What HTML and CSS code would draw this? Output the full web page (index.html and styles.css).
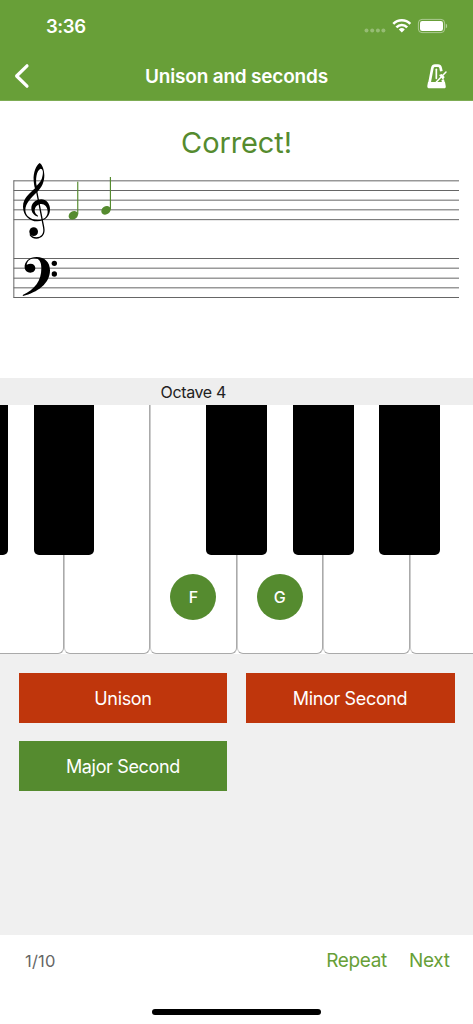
FILE: index.html
```html
<!DOCTYPE html>
<html lang="en">
  <head>
    <meta charset="utf-8" />
    <meta name="viewport" content="width=device-width, initial-scale=1" />
    <title>Unison and seconds</title>
    <link rel="stylesheet" href="styles.css">
  </head>
  <body>
    <div class="app">
      <header class="header">
        <div class="status-bar">
          <span class="time">3:36</span>
          <svg class="status-icons" viewBox="0 0 84 16" fill="#fff">
            <g opacity="0.3">
              <circle cx="2.5" cy="12.5" r="2" />
              <circle cx="8.2" cy="12.5" r="2" />
              <circle cx="13.9" cy="12.5" r="2" />
              <circle cx="19.4" cy="12.5" r="2" />
            </g>
            <g fill="none" stroke="#fff" stroke-width="2.6">
              <path d="M29.3 5.8a12 12 0 0 1 17 0" />
              <path d="M32.4 9.300a7.600 7.600 0 0 1 10.800 0" />
            </g>
            <path d="M34.800 11.400a4.300 4.300 0 0 1 6 0L37.800 14.400z" />
            <rect x="54.4" y="1.4" width="26.2" height="13.2" rx="3.6" fill="none" stroke="#fff" opacity="0.45" />
            <rect x="56" y="3" width="23" height="10" rx="2.2" />
            <path d="M81.800 5.800c1.800.5 1.800 4 0 4.500z" opacity="0.5" />
          </svg>
        </div>
        <div class="nav-bar">
          <svg class="back-icon" viewBox="0 0 16 26" fill="none" stroke="#fff" stroke-width="3.2" stroke-linecap="round" stroke-linejoin="round">
            <path d="M13 2.800L2.600 13L13 23.200" />
          </svg>
          <h1 class="title">Unison and seconds</h1>
          <svg class="metronome-icon" viewBox="578 186 66 80">
            <path fill="none" stroke="#fff" stroke-width="8" stroke-linejoin="round" d="M588 248L597 201Q599 194 605 194H614Q620 194 622 201L624 211M628 236L631 248" />
            <path fill="#fff" d="M584 243H635L637 254Q639 262 631 262H589Q581 262 582 254Z" />
            <path fill="none" stroke="#fff" stroke-width="5" stroke-linecap="round" d="M609 205V232" />
            <path fill="none" stroke="#fff" stroke-width="4.500" stroke-linecap="round" d="M609 243L638 213" />
            <path fill="#fff" d="M617 222L625 219L634 228L629 236Z" />
          </svg>
        </div>
      </header>

      <main class="score">
        <p class="feedback">Correct!</p>
        <svg class="staff" viewBox="0 0 1419 450">
          <!-- staff lines -->
          <g fill="none" stroke="#666" stroke-width="3">
            <path d="M41 77.500H1377M41 106.500H1377M41 135.500H1377M41 164.500H1377M41 194H1377" />
            <path d="M41 310.500H1377M41 339.500H1377M41 369.500H1377M41 398.500H1377M41 427.500H1377" />
            <path d="M41.500 76V429" />
          </g>
          <!-- treble clef -->
          <path fill-rule="evenodd" d="M119 24C109 30 99 52 101 77C102 88 103 94 105 100C90 114 69 130 69 155C69 181 88 199 112 199C136 199 150 183 150 163C150 145 138 133 124 133C106 133 94 145 94 160C94 172 102 182 113 185L114 182C107 178 104 172 104 166C105 154 114 147 124 147C134 147 143 156 143 170C143 186 130 195 114 195C92 195 76 182 76 165C76 145 93 129 112 110C126 97 133 80 133 61C133 44 127 29 119 24ZM122 41C128 41 130 50 128 60C126 75 119 84 110 92C106 75 109 46 122 41Z" />
          <path fill="none" stroke="#000" stroke-width="4" d="M107 94L131 217C135 239 123 249 109 249C101 249 94 245 90 238" />
          <circle cx="101" cy="230" r="13" />
          <!-- bass clef -->
          <path d="M74 339C72 320 88 306 110 306C134 306 150 322 150 346C150 386 112 413 69 423L68 420C105 403 124 378 124 340C124 320 117 310 104 310C92 310 82 317 80 329C96 322 106 330 106 339C106 348 99 353 91 353C81 353 75 347 74 339Z" />
          <circle cx="163" cy="325" r="8" />
          <circle cx="163" cy="357" r="8" />
          <!-- notes -->
          <g fill="#558b2f">
            <ellipse cx="220" cy="181" rx="15" ry="12" transform="rotate(-35 220 181)" />
            <rect x="231.500" y="80" width="3.500" height="98" />
            <ellipse cx="318" cy="166" rx="15" ry="12" transform="rotate(-35 318 166)" />
            <rect x="329.500" y="66" width="3.500" height="98" />
          </g>
        </svg>
      </main>

      <div class="octave-bar">Octave 4</div>
      <div class="keyboard">
        <div class="key"><span class="black-key"></span></div>
        <div class="key"><span class="black-key"></span></div>
        <div class="key"><span class="note">F</span></div>
        <div class="key"><span class="black-key"></span><span class="note">G</span></div>
        <div class="key"><span class="black-key"></span></div>
        <div class="key"><span class="black-key"></span></div>
      </div>

      <section class="answers">
        <button class="answer wrong">Unison</button>
        <button class="answer wrong">Minor Second</button>
        <button class="answer right">Major Second</button>
      </section>

      <footer class="footer">
        <div class="footer-row">
          <span class="progress">1/10</span>
          <a class="action">Repeat</a>
          <a class="action">Next</a>
        </div>
        <div class="home-indicator"></div>
      </footer>
    </div>
  </body>
</html>
```
FILE: styles.css
```css
* {
  box-sizing: border-box;
}

body {
  margin: 0;
  font-family: 'Inter', 'Roboto', sans-serif;
  -webkit-font-smoothing: antialiased;
}

.app {
  display: flex;
  flex-direction: column;
  width: 473px;
  height: 1024px;
  background: #fff;
  overflow: hidden;
}

/* Header */
.header {
  height: 101px;
  background: #689f38;
  border-bottom: 1px solid #7dac54;
  color: #fff;
}

.status-bar {
  display: flex;
  align-items: center;
  justify-content: space-between;
  height: 52px;
  padding: 0 25px 0 46px;
}

.time {
  font-size: 18.5px;
  font-weight: 600;
  letter-spacing: -0.4px;
}

.status-icons {
  width: 84px;
  height: 16px;
}

.nav-bar {
  display: grid;
  grid-template-columns: 60px 1fr 60px;
  align-items: center;
  height: 48px;
}

.back-icon {
  width: 16px;
  height: 26px;
  margin-left: 14px;
}

.title {
  margin: 0;
  font-size: 19px;
  font-weight: 600;
  letter-spacing: -0.2px;
  text-align: center;
}

.metronome-icon {
  width: 22px;
  height: 26.67px;
  margin-left: 12.7px;
}

/* Score */
.score {
  height: 276.5px;
}

.feedback {
  margin: 0;
  padding-top: 22px;
  height: 54px;
  font-size: 29px;
  line-height: 39px;
  letter-spacing: -0.1px;
  text-align: center;
  color: #558b2f;
}

.staff {
  display: block;
  width: 473px;
  height: 150px;
}

/* Piano */
.octave-bar {
  height: 27.5px;
  padding-left: 160.5px;
  background: #eee;
  font-size: 16px;
  line-height: 29px;
  letter-spacing: -0.35px;
  color: #222;
}

.keyboard {
  display: flex;
  height: 249px;
  overflow: hidden;
  background: #fff;
}

.key {
  position: relative;
  display: flex;
  flex: 0 0 86.45px;
  align-items: flex-end;
  justify-content: center;
  padding-bottom: 33px;
  border: 1px solid #aaa;
  border-top: none;
  border-radius: 0 0 6px 6px;
}

.key + .key {
  border-left-color: #ccc;
}

.key:first-child {
  margin-left: -22.7px;
}

/* sharps sit over the seam between two white keys */
.black-key {
  position: absolute;
  z-index: 1;
  top: 0;
  left: -31.2px;
  width: 60.7px;
  height: 150px;
  border-radius: 0 0 5px 5px;
  background: #000;
}

.note {
  width: 46px;
  height: 46px;
  border-radius: 50%;
  background: #558b2f;
  color: #fff;
  font-size: 16px;
  font-weight: 500;
  line-height: 46px;
  text-align: center;
}

/* Answers */
.answers {
  display: grid;
  flex: 1;
  grid-template-columns: 1fr 1fr;
  grid-auto-rows: 50px;
  gap: 18.3px;
  padding: 18.7px 18.5px;
  background: #f0f0f0;
}

.answer {
  padding: 0;
  border: none;
  font-family: inherit;
  font-size: 18px;
  line-height: 51px;
  letter-spacing: -0.35px;
  color: #fff;
}

.wrong {
  background: #bf360c;
}

.right {
  background: #558b2f;
}

/* Footer */
.footer {
  height: 89px;
}

.footer-row {
  display: flex;
  align-items: center;
  gap: 22px;
  height: 50px;
  padding: 0 23.5px 0 25px;
}

.progress {
  flex: 1;
  padding-top: 1px;
  font-size: 16.5px;
  letter-spacing: 0.2px;
  color: #666;
}

.action {
  font-size: 19px;
  letter-spacing: -0.35px;
  color: #689f38;
}

.home-indicator {
  width: 169px;
  height: 6px;
  margin: 24px auto 0;
  border-radius: 3px;
  background: #000;
}
```
